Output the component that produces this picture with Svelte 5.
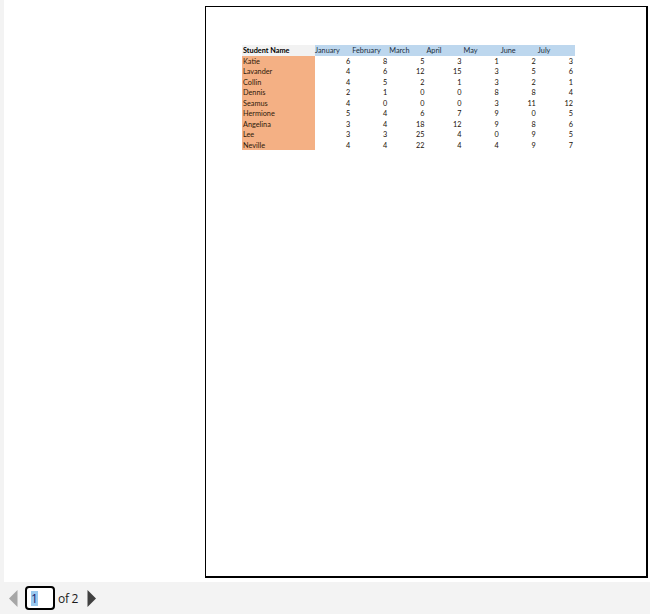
<script lang="ts">
  const months = ['January', 'February', 'March', 'April', 'May', 'June', 'July'];
  const students = [
    { name: 'Katie', marks: [6, 8, 5, 3, 1, 2, 3] },
    { name: 'Lavander', marks: [4, 6, 12, 15, 3, 5, 6] },
    { name: 'Collin', marks: [4, 5, 2, 1, 3, 2, 1] },
    { name: 'Dennis', marks: [2, 1, 0, 0, 8, 8, 4] },
    { name: 'Seamus', marks: [4, 0, 0, 0, 3, 11, 12] },
    { name: 'Hermione', marks: [5, 4, 6, 7, 9, 0, 5] },
    { name: 'Angelina', marks: [3, 4, 18, 12, 9, 8, 6] },
    { name: 'Lee', marks: [3, 3, 25, 4, 0, 9, 5] },
    { name: 'Neville', marks: [4, 4, 22, 4, 4, 9, 7] }
  ];
</script>

<div class="viewer">
  <div class="stage">
    <div class="page">
      <div class="sheet">
        <div class="corner">Student Name</div>
        {#each months as month}
          <div class="month">{month}</div>
        {/each}
        {#each students as student}
          <div class="name">{student.name}</div>
          {#each student.marks as mark}
            <div class="mark">{mark}</div>
          {/each}
        {/each}
      </div>
    </div>
  </div>
  <div class="pager">
    <svg class="arrow" width="9" height="17" viewBox="0 0 9 17"><path d="M8.5 0v17L0 8.5z" fill="#a6a6a6" /></svg>
    <div class="page-input"><span class="selected">1</span></div>
    <span class="total">of 2</span>
    <svg class="arrow" width="9" height="17" viewBox="0 0 9 17"><path d="M.5 0v17L9 8.5z" fill="#404040" /></svg>
  </div>
</div>

<style>
  :global(body) {
    margin: 0;
    background: #f3f3f3;
  }

  .viewer {
    width: 650px;
    height: 614px;
    display: flex;
    flex-direction: column;
    background: #f3f3f3;
    overflow: hidden;
  }

  .stage {
    height: 582px;
    margin-left: 4px;
    padding: 6px 2px 0 201px;
    box-sizing: border-box;
    background: #fff;
  }

  .page {
    height: 572px;
    box-sizing: border-box;
    background: #fff;
    border: solid #000;
    border-width: 1px 2px 2px 1px;
    padding: 38px 0 0 36px;
  }

  .sheet {
    width: 333px;
    display: grid;
    grid-template-columns: 73px repeat(7, 37.15px);
    grid-auto-rows: 10.5px;
    font-family: Lato, "Open Sans", sans-serif;
    font-size: 7.3px;
    line-height: 12px;
    color: #1a1008;
  }

  .corner {
    background: #f2f2f2;
    padding-left: 1px;
    font-weight: 700;
    line-height: 11px;
    color: #000;
    white-space: nowrap;
  }

  .month {
    background: #bdd7ee;
    line-height: 11px;
    color: #1c2e40;
  }

  .name {
    background: #f4b084;
    padding-left: 1px;
    color: #2e1a0a;
  }

  .mark {
    text-align: right;
    padding-right: 2px;
  }

  .pager {
    flex: 1;
    display: flex;
    align-items: center;
    padding-left: 9px;
    font-family: "Open Sans", sans-serif;
    font-size: 12px;
    color: #1a1a1a;
  }

  .page-input {
    width: 30px;
    height: 24px;
    margin-left: 7px;
    box-sizing: border-box;
    border: 2px solid #000;
    border-radius: 4px;
    background: #fff;
    padding: 3px 0 0 4px;
    line-height: 15px;
  }

  .selected {
    display: inline-block;
    height: 15px;
    width: 7px;
    background: #99c9ef;
    color: #1a1a6a;
    text-align: center;
  }

  .total {
    margin: 0 9px 0 3px;
    letter-spacing: -0.25px;
  }
</style>
